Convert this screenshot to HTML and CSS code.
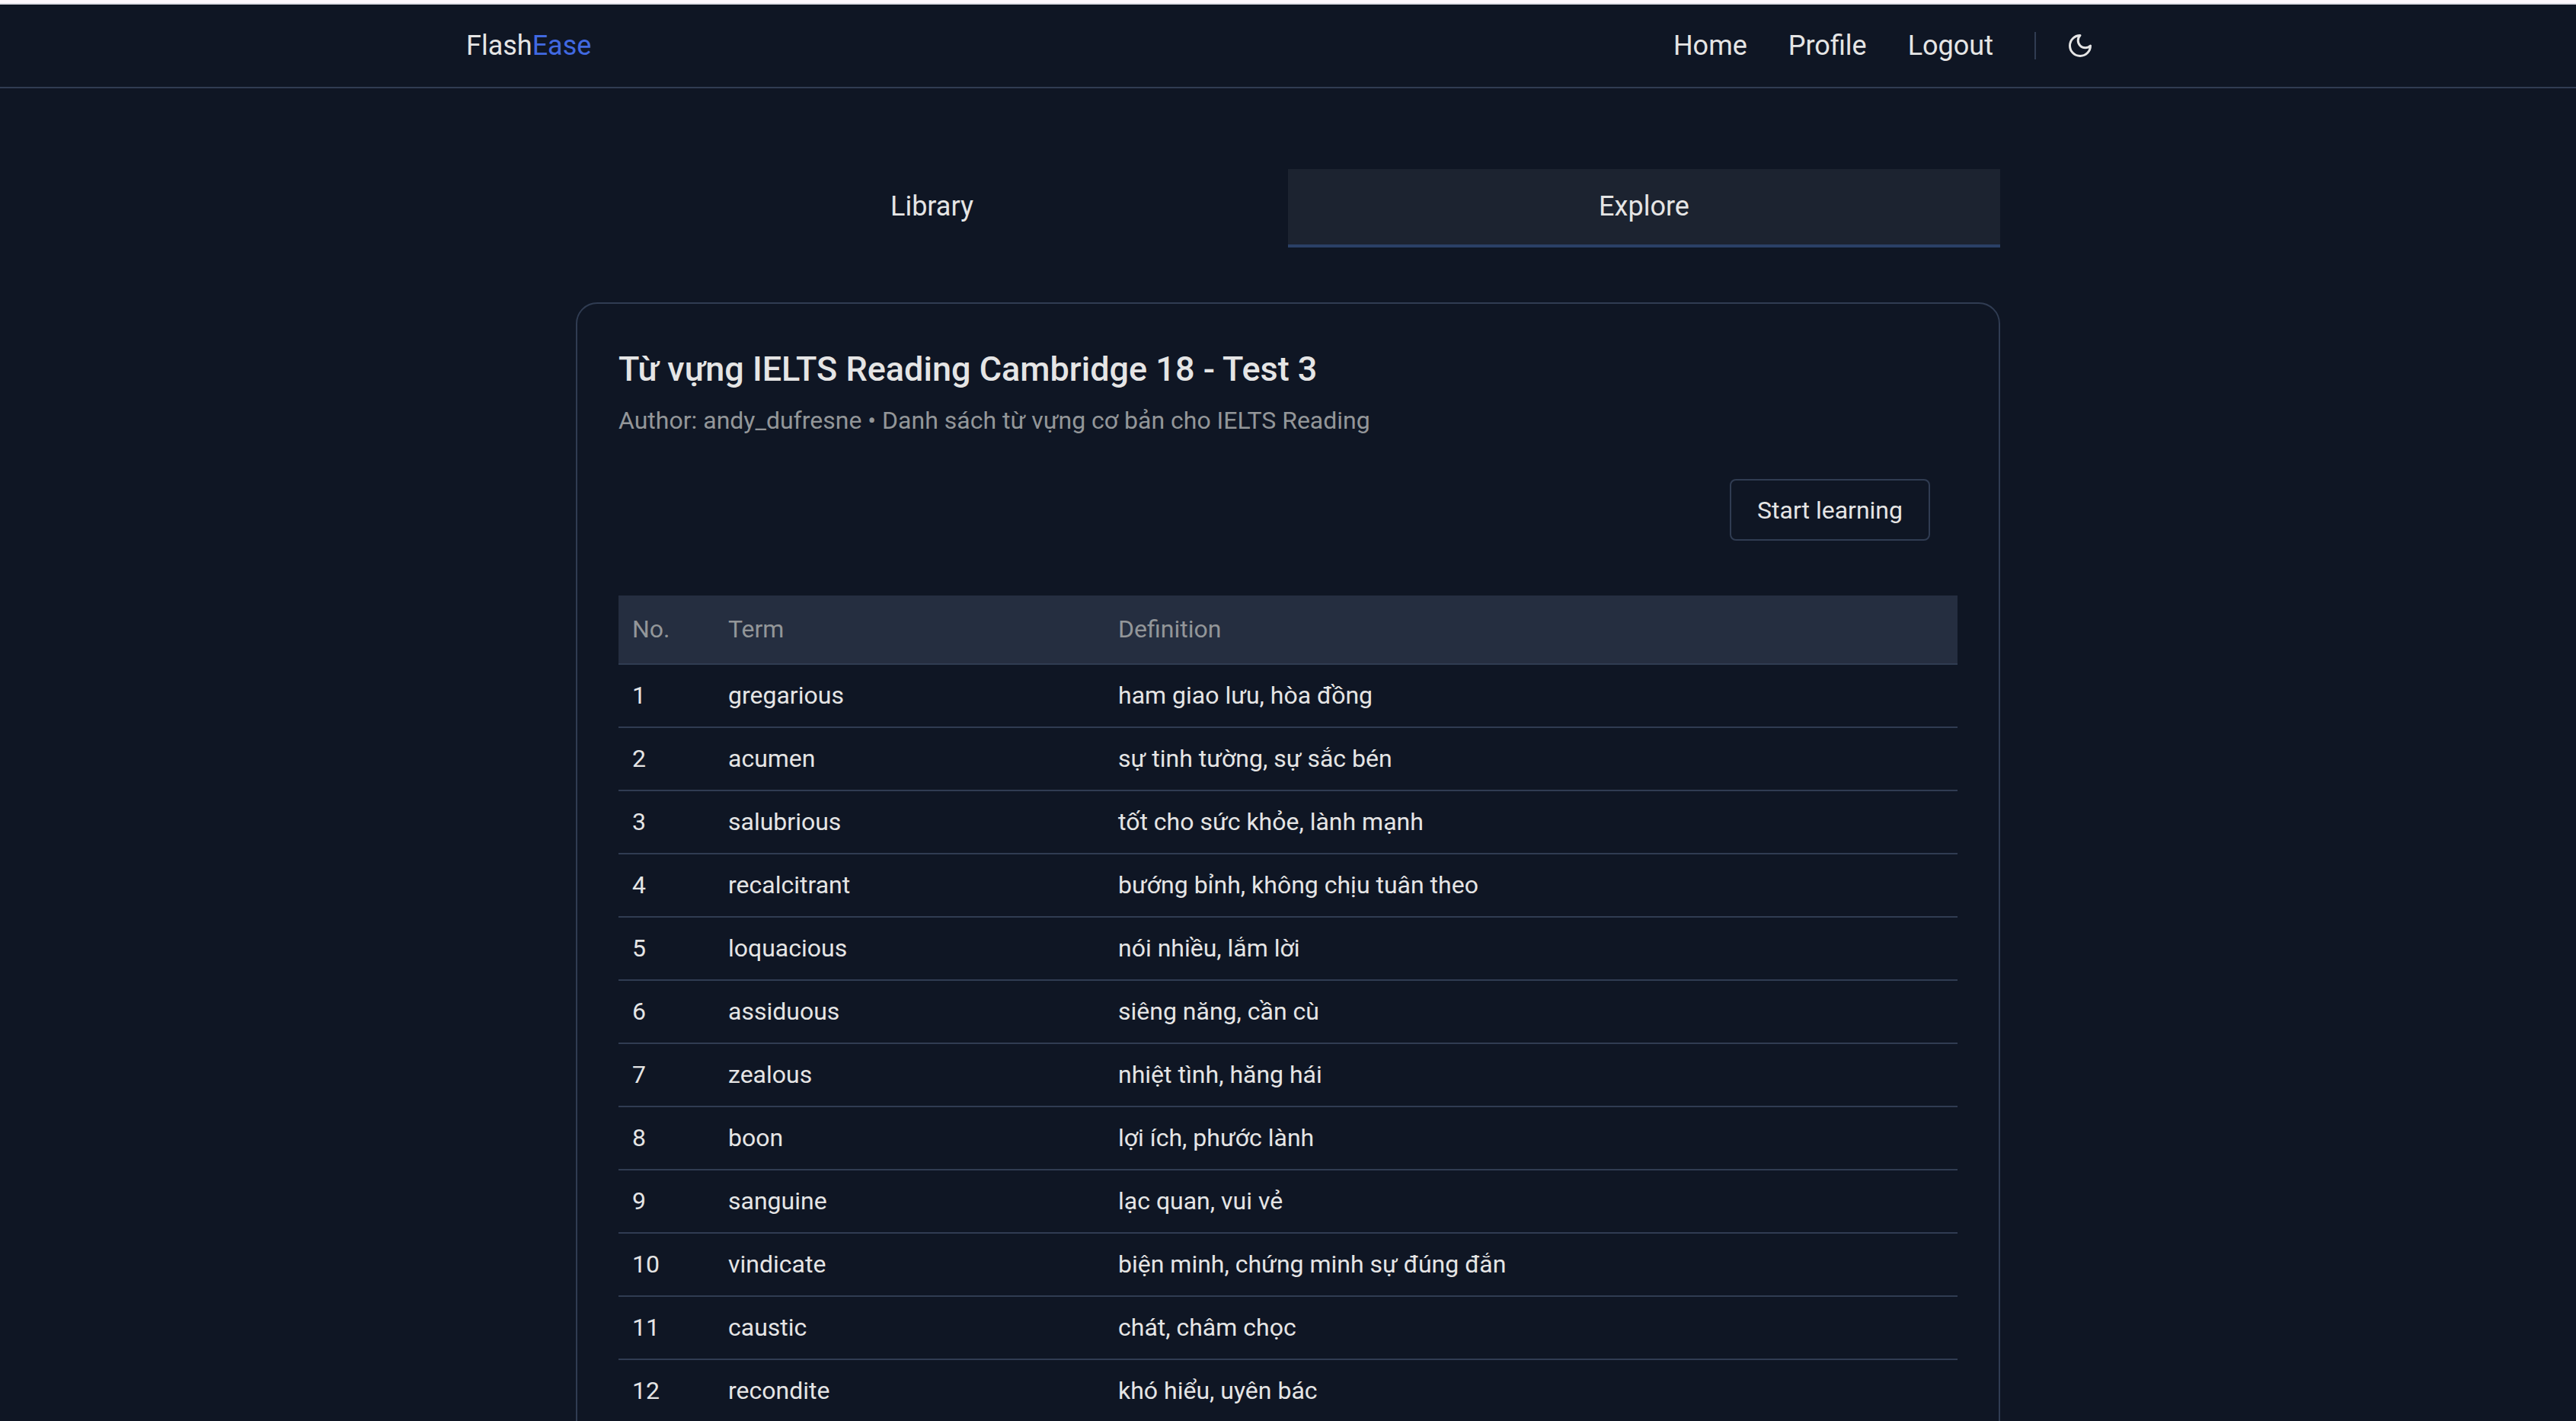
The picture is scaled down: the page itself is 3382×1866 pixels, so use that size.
FILE: index.html
```html
<!DOCTYPE html>
<html lang="vi">
<head>
<meta charset="utf-8">
<meta name="viewport" content="width=device-width, initial-scale=1">
<title>FlashEase</title>
<link rel="stylesheet" href="styles.css">
</head>
<body>
<div class="app">
  <header class="header">
    <div class="header-inner">
      <a class="logo" href="#">Flash<span class="logo-accent">Ease</span></a>
      <nav class="nav">
        <a href="#">Home</a>
        <a href="#">Profile</a>
        <a href="#">Logout</a>
        <span class="divider"></span>
        <button class="theme-toggle" type="button" aria-label="Toggle theme">
          <svg viewBox="0 0 24 24" fill="none" stroke="currentColor" stroke-width="2" stroke-linecap="round" stroke-linejoin="round"><path d="M12 3a6 6 0 0 0 9 9 9 9 0 1 1-9-9Z"/></svg>
        </button>
      </nav>
    </div>
  </header>
  <main class="main">
    <nav class="tabs">
      <a class="tab" href="#">Library</a>
      <a class="tab tab-active" href="#">Explore</a>
    </nav>
    <section class="card">
      <h1 class="card-title">Từ vựng IELTS Reading Cambridge 18 - Test 3</h1>
      <p class="card-meta">Author: andy_dufresne • Danh sách từ vựng cơ bản cho IELTS Reading</p>
      <div class="actions">
        <button class="start" type="button">Start learning</button>
      </div>
      <table class="terms">
        <thead>
          <tr><th class="col-no">No.</th><th class="col-term">Term</th><th>Definition</th></tr>
        </thead>
        <tbody>
          <tr><td>1</td><td>gregarious</td><td>ham giao lưu, hòa đồng</td></tr>
          <tr><td>2</td><td>acumen</td><td>sự tinh tường, sự sắc bén</td></tr>
          <tr><td>3</td><td>salubrious</td><td>tốt cho sức khỏe, lành mạnh</td></tr>
          <tr><td>4</td><td>recalcitrant</td><td>bướng bỉnh, không chịu tuân theo</td></tr>
          <tr><td>5</td><td>loquacious</td><td>nói nhiều, lắm lời</td></tr>
          <tr><td>6</td><td>assiduous</td><td>siêng năng, cần cù</td></tr>
          <tr><td>7</td><td>zealous</td><td>nhiệt tình, hăng hái</td></tr>
          <tr><td>8</td><td>boon</td><td>lợi ích, phước lành</td></tr>
          <tr><td>9</td><td>sanguine</td><td>lạc quan, vui vẻ</td></tr>
          <tr><td>10</td><td>vindicate</td><td>biện minh, chứng minh sự đúng đắn</td></tr>
          <tr><td>11</td><td>caustic</td><td>chát, châm chọc</td></tr>
          <tr><td>12</td><td>recondite</td><td>khó hiểu, uyên bác</td></tr>
        </tbody>
      </table>
    </section>
  </main>
</div>
</body>
</html>
```
FILE: styles.css
```css
:root {
  --bg: #0f1624;
  --line: #303c52;
  --text: #e5e5e5;
  --muted: #939699;
}

* { box-sizing: border-box; }

body {
  margin: 0;
  background: var(--bg);
  color: var(--text);
  font-family: Roboto, "Noto Sans", sans-serif;
  font-size: 32px;
  line-height: 46px;
}

a { color: inherit; text-decoration: none; }

.app {
  height: 100vh;
  overflow-y: auto;
  scrollbar-width: none;
  border-top: 4px solid #fdf8fd;
}

.header {
  border-top: 2px solid #dfdfe6;
  border-bottom: 2px solid var(--line);
}

.header-inner {
  max-width: 2158px;
  height: 108px;
  margin: 0 auto;
  display: flex;
  align-items: center;
  justify-content: space-between;
  font-size: 36px;
}

.logo-accent { color: #4169e1; }

.nav {
  display: flex;
  align-items: center;
  gap: 54px;
}

.divider {
  width: 2px;
  height: 36px;
  background: var(--line);
}

.theme-toggle {
  display: flex;
  margin: 0 0 0 -14px;
  padding: 0 21px 0 0;
  border: 0;
  background: none;
  color: inherit;
}

.theme-toggle svg { width: 36px; height: 36px; }

.main {
  max-width: 1870px;
  margin: 0 auto;
  padding-top: 106px;
}

.tabs {
  display: grid;
  grid-template-columns: 1fr 1fr;
  margin-bottom: 72px;
}

.tab {
  height: 103px;
  display: flex;
  align-items: center;
  justify-content: center;
  padding-bottom: 2px;
  border-bottom: 4px solid transparent;
  font-size: 36px;
}

.tab-active {
  background: #1c2330;
  border-bottom-color: #2a4066;
}

.card {
  border: 2px solid var(--line);
  border-radius: 28px;
  padding: 54px;
}

.card-title {
  margin: 0;
  font-size: 45px;
  font-weight: 500;
  line-height: 64px;
}

.card-meta {
  margin: 12px 0 0;
  color: var(--muted);
}

.actions {
  display: flex;
  justify-content: flex-end;
  padding: 54px 36px 72px;
}

.start {
  height: 81px;
  padding: 0 34px;
  border: 2px solid var(--line);
  border-radius: 8px;
  background: none;
  color: inherit;
  font: inherit;
}

.terms {
  width: 100%;
  border-collapse: separate;
  border-spacing: 0;
  table-layout: fixed;
  text-align: left;
}

.terms th,
.terms td {
  padding: 17px 18px 18px;
  border-bottom: 2px solid var(--line);
}

.terms th {
  padding: 21px 18px 22px;
  background: #252e40;
  color: var(--muted);
  font-weight: 400;
}

.col-no { width: 126px; }
.col-term { width: 512px; }
```
